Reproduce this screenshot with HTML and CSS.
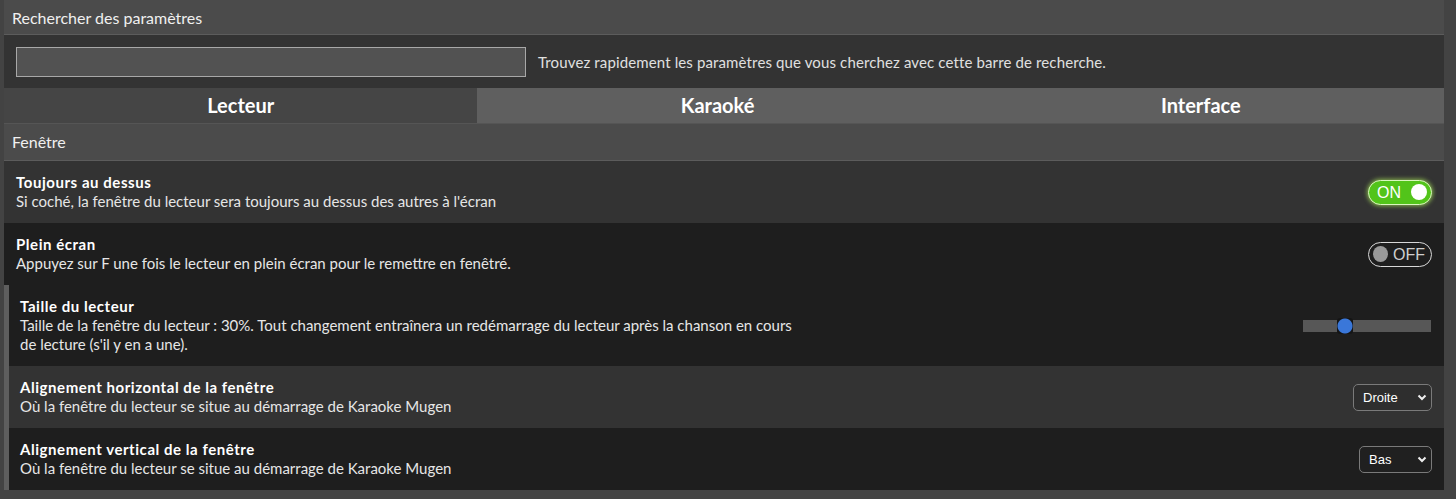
FILE: index.html
```html
<!DOCTYPE html>
<html lang="fr">
<head>
    <meta charset="UTF-8">
    <meta name="viewport" content="width=device-width, initial-scale=1.0">
    <title>Paramètres</title>
    <link rel="stylesheet" href="styles.css">
</head>
<body>
    <div class="settings">
        <div class="panel-heading">Rechercher des paramètres</div>
        <div class="search-row">
            <input class="search-input" type="text">
            <span class="search-hint">Trouvez rapidement les paramètres que vous cherchez avec cette barre de recherche.</span>
        </div>
        <div class="tabs">
            <div class="tab active">Lecteur</div>
            <div class="tab">Karaoké</div>
            <div class="tab">Interface</div>
        </div>
        <div class="panel-heading section-heading">Fenêtre</div>

        <div class="setting">
            <div class="setting-text">
                <div class="setting-title">Toujours au dessus</div>
                <div class="setting-desc">Si coché, la fenêtre du lecteur sera toujours au dessus des autres à l'écran</div>
            </div>
            <span class="switch on"><span class="switch-label">ON</span><span class="switch-knob"></span></span>
        </div>

        <div class="setting dark">
            <div class="setting-text">
                <div class="setting-title">Plein écran</div>
                <div class="setting-desc">Appuyez sur F une fois le lecteur en plein écran pour le remettre en fenêtré.</div>
            </div>
            <span class="switch off"><span class="switch-knob"></span><span class="switch-label">OFF</span></span>
        </div>

        <div class="subsettings">
            <div class="setting dark">
                <div class="setting-text">
                    <div class="setting-title">Taille du lecteur</div>
                    <div class="setting-desc">Taille de la fenêtre du lecteur : 30%. Tout changement entraînera un redémarrage du lecteur après la chanson en cours de lecture (s'il y en a une).</div>
                </div>
                <div class="slider">
                    <div class="slider-track"></div>
                    <div class="slider-thumb" style="left: calc((100% - 16px) * 0.3)"></div>
                </div>
            </div>

            <div class="setting">
                <div class="setting-text">
                    <div class="setting-title">Alignement horizontal de la fenêtre</div>
                    <div class="setting-desc">Où la fenêtre du lecteur se situe au démarrage de Karaoke Mugen</div>
                </div>
                <span class="select-wrap">
                    <select class="select">
                        <option>Droite</option>
                        <option>Centre</option>
                        <option>Gauche</option>
                    </select>
                    <svg class="select-arrow" width="10" height="7" viewBox="0 0 10 7"><path d="M1.5 1.5 L5 5 L8.5 1.5" fill="none" stroke="#eee" stroke-width="2"/></svg>
                </span>
            </div>

            <div class="setting dark">
                <div class="setting-text">
                    <div class="setting-title">Alignement vertical de la fenêtre</div>
                    <div class="setting-desc">Où la fenêtre du lecteur se situe au démarrage de Karaoke Mugen</div>
                </div>
                <span class="select-wrap">
                    <select class="select">
                        <option>Bas</option>
                        <option>Centre</option>
                        <option>Haut</option>
                    </select>
                    <svg class="select-arrow" width="10" height="7" viewBox="0 0 10 7"><path d="M1.5 1.5 L5 5 L8.5 1.5" fill="none" stroke="#eee" stroke-width="2"/></svg>
                </span>
            </div>
        </div>
    </div>
</body>
</html>
```

FILE: styles.css
```css
body {
    margin: 0;
    background: #434343;
    font-family: Lato, 'Noto Sans', sans-serif;
    font-size: 15px;
    color: #e6e6e6;
}
.settings {
    width: 1440px;
    margin-left: 4px;
}
.panel-heading {
    background: #4b4b4b;
    border-bottom: 1px solid #5c5c5c;
    padding: 8px 8px 7px;
    font-size: 16px;
    line-height: 19px;
    color: #f0f0f0;
}
.section-heading {
    border-top: 1px solid #555;
    padding: 8px;
    line-height: 20px;
}
.search-row {
    display: flex;
    align-items: center;
    gap: 12px;
    background: #333;
    padding: 12px;
    height: 29px;
}
.search-input {
    width: 510px;
    height: 30px;
    box-sizing: border-box;
    background: #525252;
    border: 1px solid #a8a8a8;
    color: #fff;
    outline: none;
}
.search-hint {
    color: #e0e0e0;
    letter-spacing: 0.13px;
}
.tabs {
    display: flex;
    background: #333;
}
.tab {
    flex: 1 1 auto;
    text-align: center;
    font-size: 20px;
    font-weight: bold;
    line-height: 35px;
    color: #fff;
    background: #5f5f5f;
}
.tab.active {
    background: #454545;
}
.setting {
    display: flex;
    align-items: center;
    justify-content: space-between;
    padding: 12px;
    background: #333;
    line-height: 19px;
}
.setting.dark {
    background: #1e1e1e;
}
.setting-text {
    max-width: 785px;
}
.setting-title {
    font-weight: bold;
    letter-spacing: 0.55px;
    color: #fff;
}
.setting-desc {
    color: #e6e6e6;
}
.subsettings {
    border-left: 5px solid #5e5e5e;
}
.subsettings .setting {
    padding-left: 11px;
}

/* switches */
.switch {
    display: flex;
    align-items: center;
    box-sizing: border-box;
    width: 64px;
    height: 25px;
    border-radius: 13px;
    font-family: 'Liberation Sans', Arial, sans-serif;
    font-size: 16px;
}
.switch.on {
    background: #52c41a;
    border: 1px solid #d9f7be;
    box-shadow: 0 0 4px 1px rgba(170, 230, 90, 0.7);
    color: #fff;
    padding: 0 4px 0 8px;
    justify-content: space-between;
}
.switch.off {
    border: 1px solid #d8d8d8;
    color: #cfcfcf;
    padding: 0 6px 0 4px;
    gap: 5px;
}
.switch-knob {
    width: 16px;
    height: 16px;
    border-radius: 50%;
    background: #fff;
}
.switch.off .switch-knob {
    background: #999;
}

/* slider */
.slider {
    position: relative;
    width: 128px;
    height: 16px;
    margin-right: 1px;
}
.slider-track {
    position: absolute;
    top: 2px;
    left: 0;
    right: 0;
    height: 12px;
    background: #575757;
}
.slider-thumb {
    position: absolute;
    top: 0;
    width: 16px;
    height: 16px;
    border-radius: 3px;
    background: radial-gradient(circle, #3a77d9 7px, #151515 8px);
}

/* selects */
.select-wrap {
    position: relative;
    display: inline-block;
}
.select {
    appearance: none;
    -webkit-appearance: none;
    height: 27px;
    padding: 0 22px 0 9px;
    background: #2e2e2e;
    color: #fff;
    border: 1px solid #7a7a7a;
    border-radius: 5px;
    font-family: 'Liberation Sans', Arial, sans-serif;
    font-size: 13px;
}
.setting.dark .select {
    background: #202020;
}
.select-arrow {
    position: absolute;
    right: 5px;
    top: 10px;
    pointer-events: none;
}
```
